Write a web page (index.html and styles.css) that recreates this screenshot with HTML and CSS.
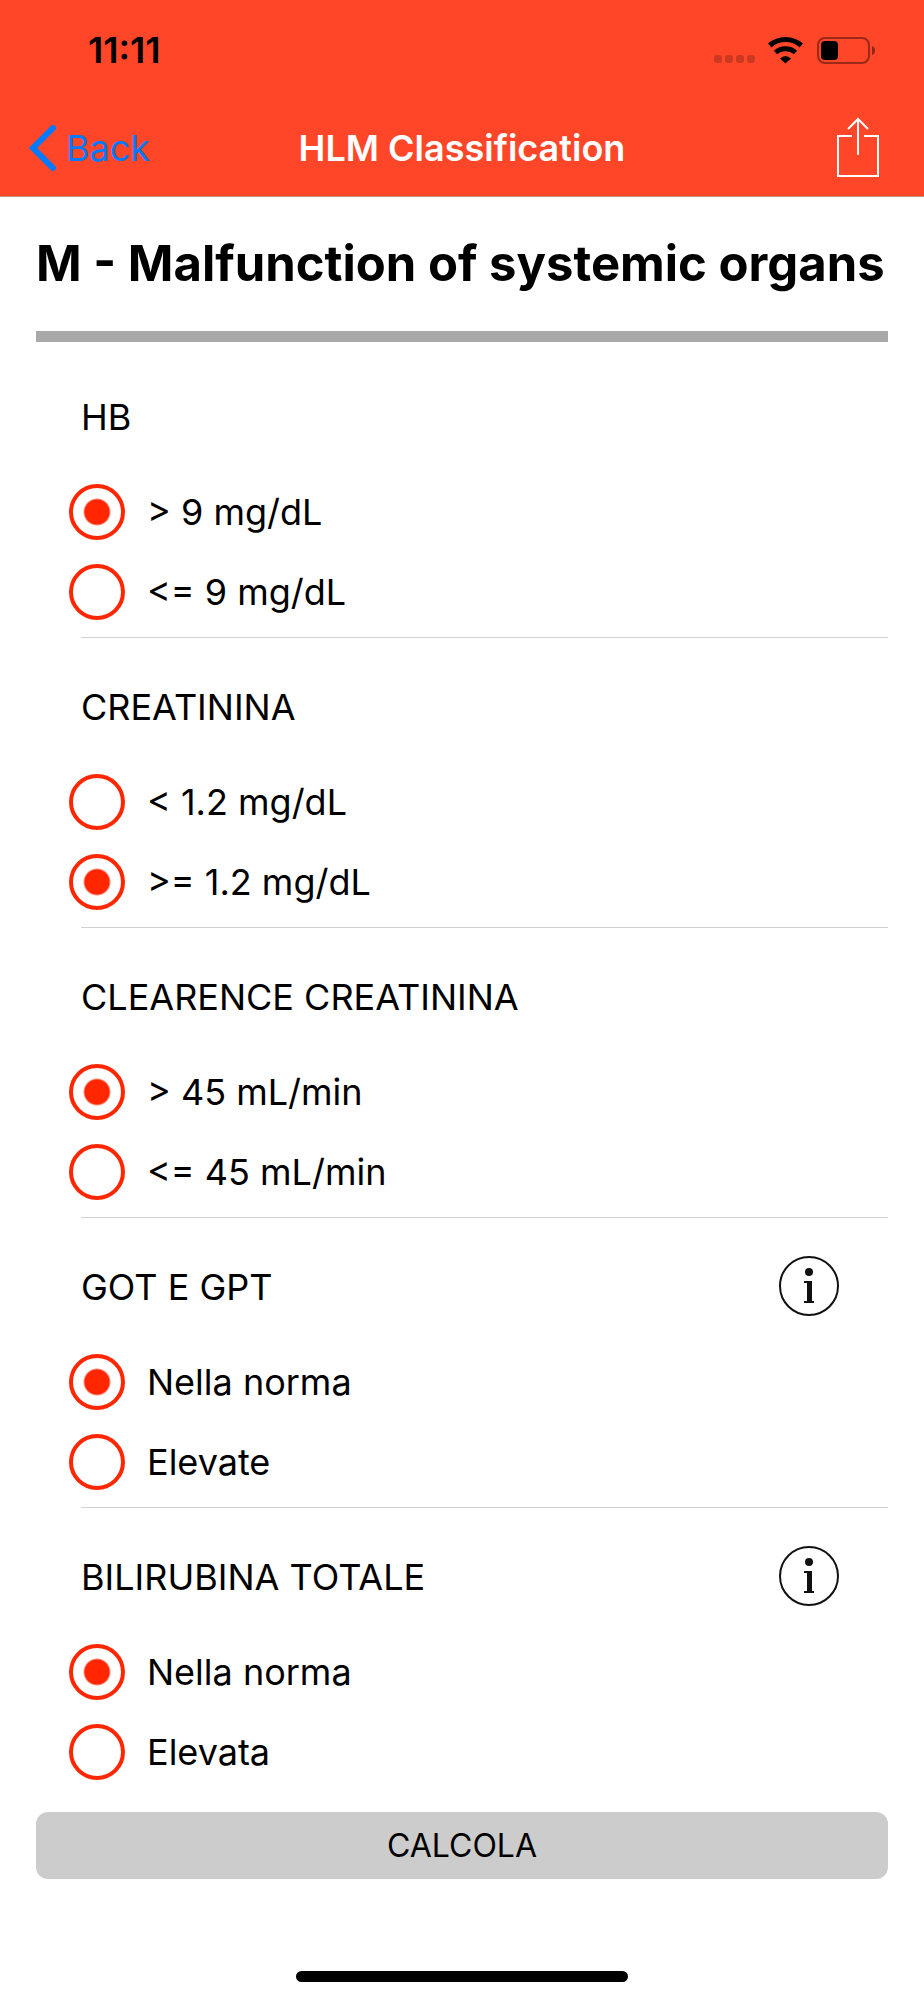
FILE: index.html
```html
<!DOCTYPE html>
<html lang="it">
<head>
<meta charset="utf-8" />
<meta name="viewport" content="width=device-width, initial-scale=1" />
<title>HLM Classification</title>
<link rel="stylesheet" href="styles.css">
</head>

<body>
<header>
	<div class="status">
		<span class="time">11:11</span>
		<svg class="signal" width="164" height="30" viewBox="0 0 164 30" aria-hidden="true">
			<g fill="#000" fill-opacity=".2">
				<rect x="1" y="20" width="8" height="8" rx="3"/>
				<rect x="12" y="20" width="8" height="8" rx="3"/>
				<rect x="23" y="20" width="8" height="8" rx="3"/>
				<rect x="34" y="20" width="8" height="8" rx="3"/>
			</g>
			<!-- wifi -->
			<path d="M56.700 10.500 A24 24 0 0 1 88.300 10.500" fill="none" stroke="#000" stroke-width="5"/>
			<path d="M62.500 17.500 A15 15 0 0 1 82.500 17.500" fill="none" stroke="#000" stroke-width="5"/>
			<path d="M67 23.500 Q72.500 18.500 78 23.500 L72.500 28.500 Z" fill="#000"/>
			<!-- battery -->
			<rect x="105" y="3" width="51" height="25" rx="7" fill="none" stroke="#000" stroke-opacity=".4" stroke-width="2"/>
			<rect x="108" y="6" width="17" height="19" rx="4" fill="#000"/>
			<path d="M159 11 Q162 12 162 15.500 Q162 19 159 20 Z" fill="#000" fill-opacity=".45"/>
		</svg>
	</div>
	<nav>
		<a class="back" href="#">
			<svg width="28" height="48" viewBox="0 0 28 48" aria-hidden="true">
				<path d="M25 4 L5 24 L25 44" fill="none" stroke="#007aff" stroke-width="6" stroke-linecap="round"/>
			</svg>
			Back
		</a>
		<span class="navtitle">HLM Classification</span>
		<button class="share" type="button" aria-label="Share">
			<svg width="44" height="62" viewBox="0 0 44 62" aria-hidden="true">
				<path d="M16 19 H2 V59 H42 V19 H28 M22 38 V2 M12 12 L22 2 L32 12" fill="none" stroke="#fff" stroke-width="2"/>
			</svg>
		</button>
	</nav>
</header>

<main>
<h1>M - Malfunction of systemic organs</h1>
<form name="organs">

<fieldset aria-labelledby="t_hb">
	<div class="head"><h2 id="t_hb">HB</h2></div>
	<label><input type="radio" name="hb" value="0" checked="checked" />&gt; 9 mg/dL</label>
	<label><input type="radio" name="hb" value="1" />&lt;= 9 mg/dL</label>
</fieldset>

<fieldset aria-labelledby="t_crea">
	<div class="head"><h2 id="t_crea">CREATININA</h2></div>
	<label><input type="radio" name="crea" value="0" />&lt; 1.2 mg/dL</label>
	<label><input type="radio" name="crea" value="1" checked="checked" />&gt;= 1.2 mg/dL</label>
</fieldset>

<fieldset aria-labelledby="t_clear">
	<div class="head"><h2 id="t_clear">CLEARENCE CREATININA</h2></div>
	<label><input type="radio" name="clear" value="0" checked="checked" />&gt; 45 mL/min</label>
	<label><input type="radio" name="clear" value="1" />&lt;= 45 mL/min</label>
</fieldset>

<fieldset aria-labelledby="t_got">
	<div class="head">
		<h2 id="t_got">GOT E GPT</h2>
		<button class="info" type="button" aria-label="Info GOT E GPT">
			<svg width="62" height="62" viewBox="0 0 62 62" aria-hidden="true">
				<circle cx="31" cy="30" r="29" fill="none" stroke="#111" stroke-width="2"/>
				<circle cx="31" cy="16" r="4" fill="#111"/>
				<path d="M26 25 H34 V45 H36 V47 H26 V45 H29 V27 H26 Z" fill="#111"/>
			</svg>
		</button>
	</div>
	<label><input type="radio" name="got" value="0" checked="checked" />Nella norma</label>
	<label><input type="radio" name="got" value="1" />Elevate</label>
</fieldset>

<fieldset aria-labelledby="t_bili">
	<div class="head">
		<h2 id="t_bili">BILIRUBINA TOTALE</h2>
		<button class="info" type="button" aria-label="Info BILIRUBINA TOTALE">
			<svg width="62" height="62" viewBox="0 0 62 62" aria-hidden="true">
				<circle cx="31" cy="30" r="29" fill="none" stroke="#111" stroke-width="2"/>
				<circle cx="31" cy="16" r="4" fill="#111"/>
				<path d="M26 25 H34 V45 H36 V47 H26 V45 H29 V27 H26 Z" fill="#111"/>
			</svg>
		</button>
	</div>
	<label><input type="radio" name="bili" value="0" checked="checked" />Nella norma</label>
	<label><input type="radio" name="bili" value="1" />Elevata</label>
</fieldset>

<button class="calc" type="submit">CALCOLA</button>
</form>
</main>

<div class="homebar"></div>
</body>
</html>
```
FILE: styles.css
```css
* {
	box-sizing: border-box;
}
body {
	margin: 0;
	min-height: 100vh;
	display: flex;
	flex-direction: column;
	font-family: Inter, "Liberation Sans", sans-serif;
	font-size: 36px;
	color: #000;
	background-color: #fff;
}
button {
	border: none;
	padding: 0;
	background: none;
	font-family: inherit;
	color: inherit;
}
svg {
	display: block;
}

/* top bar */
header {
	background-color: #ff4628;
	border-bottom: 1px solid #d0907f;
}
.status {
	display: flex;
	justify-content: space-between;
	align-items: center;
	height: 100px;
	padding: 0 47px 0 88px;
}
.time {
	font-size: 36px;
	font-weight: 600;
}
nav {
	display: grid;
	grid-template-columns: 1fr auto 1fr;
	align-items: center;
	height: 96px;
	padding: 0 28px;
}
.back {
	display: flex;
	align-items: center;
	gap: 10px;
	color: #007aff;
	text-decoration: none;
}
.navtitle {
	font-weight: 600;
	color: #fff;
}
.share {
	justify-self: end;
	margin-right: 16px;
}

/* content */
main {
	padding: 0 36px;
}
h1 {
	margin: 0 0 6px;
	padding: 36px 0;
	border-bottom: 11px solid #a9a9a9;
	font-size: 49px;
	line-height: 62px;
	font-weight: 700;
}
form {
	margin: 0;
}
fieldset {
	margin: 0 0 0 45px;
	padding: 0 0 5px;
	border: none;
	border-bottom: 1px solid #d0d0d0;
	min-width: 0;
}
fieldset:last-of-type {
	border-bottom: none;
}
.head {
	display: flex;
	justify-content: space-between;
	align-items: center;
	min-height: 124px;
	padding: 38px 48px 24px 0;
}
h2 {
	margin: 0;
	font-size: 36px;
	font-weight: 400;
}
label {
	display: flex;
	align-items: center;
	gap: 22px;
	height: 80px;
	margin-left: -12px;
}
input[type=radio] {
	appearance: none;
	flex: none;
	width: 56px;
	height: 56px;
	margin: 0;
	border: 4px solid #ff2600;
	border-radius: 50%;
}
input[type=radio]:checked {
	background: radial-gradient(circle, #ff2600 12px, transparent 14px);
}
.calc {
	display: block;
	width: 100%;
	height: 67px;
	margin-top: 15px;
	border-radius: 12px;
	background-color: #ccc;
	font-size: 32px;
}
.homebar {
	width: 36%;
	height: 11px;
	margin: auto auto 18px;
	border-radius: 6px;
	background-color: #000;
}
```
